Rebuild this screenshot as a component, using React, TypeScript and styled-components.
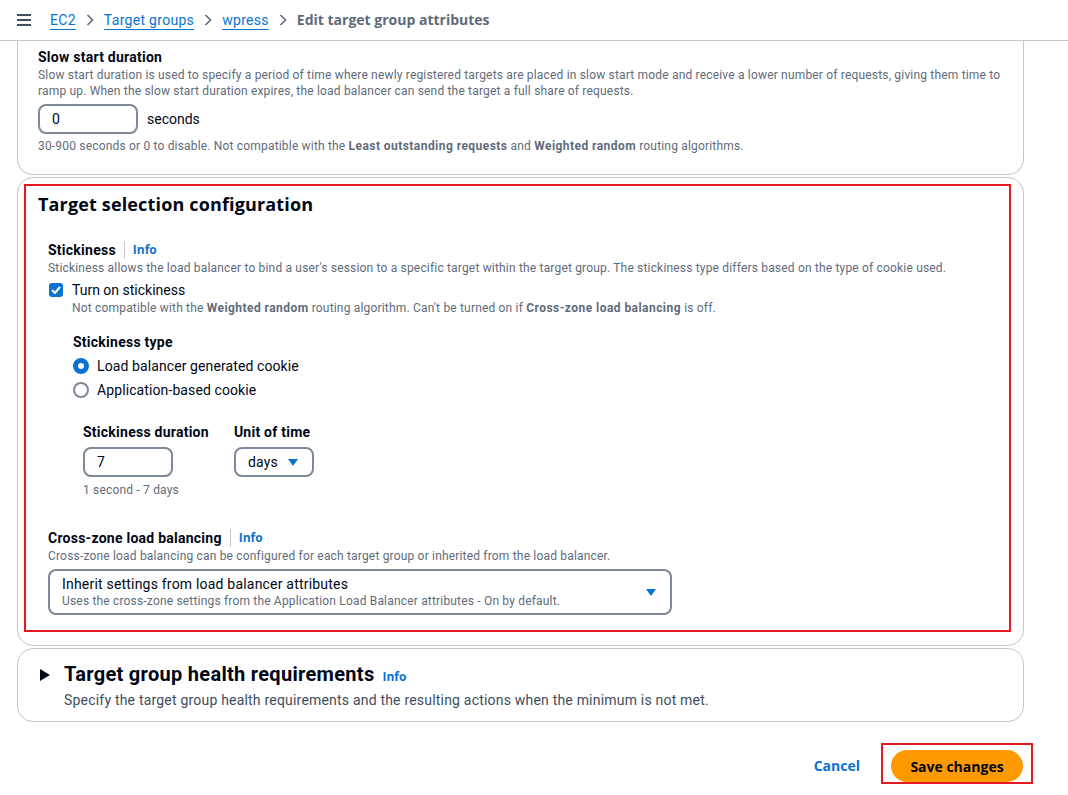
import React from 'react'
import styled, { createGlobalStyle } from 'styled-components'

const bold = `"Open Sans", Roboto, "Liberation Sans", Arial, sans-serif`

const GlobalStyle = createGlobalStyle`
  html, body {
    margin: 0;
    padding: 0;
    background: #ffffff;
  }
  body {
    font-family: Roboto, "Liberation Sans", Arial, sans-serif;
    color: #000716;
  }
  * {
    box-sizing: border-box;
  }
`

const Page = styled.div`
  width: 1068px;
  height: 795px;
  overflow: hidden;
  display: flex;
  flex-direction: column;
`

const TopBar = styled.header`
  height: 41px;
  flex: none;
  display: flex;
  align-items: center;
  padding-left: 17px;
  border-bottom: 1px solid #c6c6cd;
  font-size: 14px;
`

const Burger = styled.svg`
  width: 14px;
  height: 12px;
  margin-right: 19px;
`

const Crumbs = styled.nav`
  display: flex;
  align-items: center;
  gap: 10px;
  line-height: 20px;
`

const Crumb = styled.a`
  color: #0972d3;
  letter-spacing: 0.3px;
  text-decoration: underline;
  text-underline-offset: 4px;
  text-decoration-thickness: 1px;
  cursor: pointer;
`

const Current = styled.span`
  color: #5f6b7a;
  font-family: ${bold};
  font-weight: 700;
`

const Chevron = styled.svg`
  width: 8px;
  height: 12px;
`

const Content = styled.main`
  flex: 1;
  display: flex;
  flex-direction: column;
  padding: 0 35px 0 17px;
`

const Card = styled.section<{ $clipped?: boolean }>`
  margin-right: 9px;
  border: 1px solid #c6c6cd;
  border-top: ${(p) => (p.$clipped ? 'none' : '1px solid #c6c6cd')};
  border-radius: ${(p) => (p.$clipped ? '0 0 16px 16px' : '16px')};
  margin-bottom: 2px;
`

const SlowStart = styled.div`
  padding: 6px 14px 20px 20px;
`

const Label = styled.div`
  font-size: 14px;
  font-weight: 700;
  line-height: 20px;
  letter-spacing: 0.25px;
  display: flex;
  align-items: center;
`

const Desc = styled.div`
  font-size: 12px;
  line-height: 16px;
  color: #5f6b7a;
  letter-spacing: 0.18px;
  b {
    font-weight: 700;
    letter-spacing: 0.45px;
  }
`

const InputRow = styled.div`
  display: flex;
  align-items: center;
  gap: 9px;
  margin: 5px 0 4px;
  font-size: 14px;
`

const TextInput = styled.div<{ $w: number }>`
  width: ${(p) => p.$w}px;
  height: 30px;
  border: 2px solid #7d8998;
  border-radius: 8px;
  display: flex;
  align-items: center;
  padding-left: 12px;
  font-size: 14px;
`

const Highlight = styled.div<{ $pad: string }>`
  border: 2px solid #e41b23;
  padding: ${(p) => p.$pad};
`

const CardInner = styled.div`
  padding: 6px 12px 13px 6px;
`

const Title = styled.h2`
  margin: 0;
  font-family: ${bold};
  font-size: 18px;
  line-height: 24px;
  letter-spacing: 0.15px;
  font-weight: 700;
`

const Group = styled.div<{ $indent?: number; $top?: number }>`
  margin-left: ${(p) => p.$indent || 0}px;
  margin-top: ${(p) => p.$top || 0}px;
`

const Divider = styled.span`
  width: 1px;
  height: 18px;
  background: #c6c6cd;
  margin: 0 8px;
`

const InfoLink = styled.a`
  color: #0972d3;
  font-family: ${bold};
  font-size: 12px;
  font-weight: 700;
  letter-spacing: 0;
`

const CheckRow = styled.div`
  display: flex;
  align-items: center;
  gap: 9px;
  margin-top: 4px;
  font-size: 14px;
  line-height: 20px;
`

const CheckBox = styled.span`
  width: 14px;
  height: 14px;
  border-radius: 3px;
  background: #0972d3;
  display: flex;
  align-items: center;
  justify-content: center;
  margin-left: 1px;
`

const RadioRow = styled.div`
  display: flex;
  align-items: center;
  gap: 8px;
  height: 24px;
  font-size: 14px;
  letter-spacing: 0.1px;
`

const Radio = styled.span<{ $on?: boolean }>`
  width: 16px;
  height: 16px;
  border-radius: 50%;
  border: ${(p) => (p.$on ? '5px solid #0972d3' : '2px solid #7d8998')};
  background: #ffffff;
`

const Fields = styled.div`
  display: flex;
  gap: 25px;
`

const Field = styled.div`
  display: flex;
  flex-direction: column;
  gap: 5px;
`

const Select = styled.div<{ $w: number; $h: number }>`
  width: ${(p) => p.$w}px;
  height: ${(p) => p.$h}px;
  border: 2px solid #7d8998;
  border-radius: 8px;
  display: flex;
  align-items: center;
  justify-content: space-between;
  padding: 0 14px 0 12px;
  font-size: 14px;
  letter-spacing: 0.2px;
`

const SelectText = styled.div`
  display: flex;
  flex-direction: column;
  line-height: 18px;
`

const Caret = styled.svg`
  width: 10px;
  height: 7px;
`

const Health = styled.div`
  display: flex;
  gap: 14px;
  padding: 12px 22px 11px;
`

const Triangle = styled.svg`
  width: 10px;
  height: 12px;
  margin-top: 8px;
`

const HealthTitle = styled.h3`
  margin: 0;
  font-size: 20px;
  line-height: 26px;
  font-weight: 700;
  letter-spacing: 0.3px;
  display: flex;
  align-items: baseline;
  gap: 8px;
`

const HealthDesc = styled.div`
  font-size: 14px;
  line-height: 20px;
  color: #414d5c;
  letter-spacing: 0.2px;
`

const Footer = styled.footer`
  display: flex;
  justify-content: flex-end;
  align-items: center;
  gap: 21px;
  margin-top: 19px;
`

const LinkButton = styled.a`
  color: #0972d3;
  font-family: ${bold};
  font-size: 14px;
  font-weight: 700;
  margin-top: 4px;
`

const Primary = styled.button`
  width: 132px;
  height: 32px;
  border: none;
  border-radius: 16px;
  background: #ff9900;
  color: #000716;
  font-family: ${bold};
  font-size: 14px;
  font-weight: 700;
`

const chevron = (
  <Chevron viewBox="0 0 8 12">
    <path d="M1.5 1 L6.5 6 L1.5 11" fill="none" stroke="#5f6b7a" strokeWidth="1.6" />
  </Chevron>
)

const blueCaret = (
  <Caret viewBox="0 0 10 7">
    <path d="M0 0 H10 L5 7 Z" fill="#0972d3" />
  </Caret>
)

export default function App() {
  return (
    <Page>
      <GlobalStyle />
      <TopBar>
        <Burger viewBox="0 0 14 12">
          <path d="M0 1 H14 M0 6 H14 M0 11 H14" stroke="#414d5c" strokeWidth="2" />
        </Burger>
        <Crumbs>
          <Crumb>EC2</Crumb>
          {chevron}
          <Crumb>Target groups</Crumb>
          {chevron}
          <Crumb>wpress</Crumb>
          {chevron}
          <Current>Edit target group attributes</Current>
        </Crumbs>
      </TopBar>

      <Content>
        <Card $clipped>
          <SlowStart>
            <Label>Slow start duration</Label>
            <Desc>
              Slow start duration is used to specify a period of time where newly registered targets are placed in slow
              start mode and receive a lower number of requests, giving them time to ramp up. When the slow start
              duration expires, the load balancer can send the target a full share of requests.
            </Desc>
            <InputRow>
              <TextInput $w={100}>0</TextInput>
              seconds
            </InputRow>
            <Desc>
              30-900 seconds or 0 to disable. Not compatible with the <b>Least outstanding requests</b> and{' '}
              <b>Weighted random</b> routing algorithms.
            </Desc>
          </SlowStart>
        </Card>

        <Card>
          <CardInner>
            <Highlight $pad="6px 12px 15px 12px">
              <Title>Target selection configuration</Title>

              <Group $indent={10} $top={24}>
                <Label>
                  Stickiness
                  <Divider />
                  <InfoLink>Info</InfoLink>
                </Label>
                <Desc>
                  Stickiness allows the load balancer to bind a user's session to a specific target within the target
                  group. The stickiness type differs based on the type of cookie used.
                </Desc>
                <CheckRow>
                  <CheckBox>
                    <svg width="10" height="8" viewBox="0 0 10 8">
                      <path d="M1 4 L4 7 L9 1" fill="none" stroke="#ffffff" strokeWidth="2" />
                    </svg>
                  </CheckBox>
                  Turn on stickiness
                </CheckRow>
                <Group $indent={24}>
                  <Desc>
                    Not compatible with the <b>Weighted random</b> routing algorithm. Can't be turned on if{' '}
                    <b>Cross-zone load balancing</b> is off.
                  </Desc>
                  <Group $indent={1} $top={16}>
                    <Label>Stickiness type</Label>
                    <Group $top={2}>
                      <RadioRow>
                        <Radio $on />
                        Load balancer generated cookie
                      </RadioRow>
                      <RadioRow>
                        <Radio />
                        Application-based cookie
                      </RadioRow>
                    </Group>
                    <Group $indent={10} $top={20}>
                      <Fields>
                        <Field>
                          <Label>Stickiness duration</Label>
                          <TextInput $w={90}>7</TextInput>
                        </Field>
                        <Field>
                          <Label>Unit of time</Label>
                          <Select $w={80} $h={30}>
                            days
                            {blueCaret}
                          </Select>
                        </Field>
                      </Fields>
                      <Group $top={5}>
                        <Desc>1 second - 7 days</Desc>
                      </Group>
                    </Group>
                  </Group>
                </Group>
              </Group>

              <Group $indent={10} $top={30}>
                <Label>
                  Cross-zone load balancing
                  <Divider />
                  <InfoLink>Info</InfoLink>
                </Label>
                <Desc>Cross-zone load balancing can be configured for each target group or inherited from the load balancer.</Desc>
                <Group $top={5}>
                  <Select $w={624} $h={46}>
                    <SelectText>
                      Inherit settings from load balancer attributes
                      <Desc>Uses the cross-zone settings from the Application Load Balancer attributes - On by default.</Desc>
                    </SelectText>
                    {blueCaret}
                  </Select>
                </Group>
              </Group>
            </Highlight>
          </CardInner>
        </Card>

        <Card>
          <Health>
            <Triangle viewBox="0 0 10 12">
              <path d="M0 0 L10 6 L0 12 Z" fill="#000716" />
            </Triangle>
            <div>
              <HealthTitle>
                Target group health requirements
                <InfoLink>Info</InfoLink>
              </HealthTitle>
              <HealthDesc>
                Specify the target group health requirements and the resulting actions when the minimum is not met.
              </HealthDesc>
            </div>
          </Health>
        </Card>

        <Footer>
          <LinkButton>Cancel</LinkButton>
          <Highlight $pad="5px 8px 0 8px">
            <Primary>Save changes</Primary>
          </Highlight>
        </Footer>
      </Content>
    </Page>
  )
}
